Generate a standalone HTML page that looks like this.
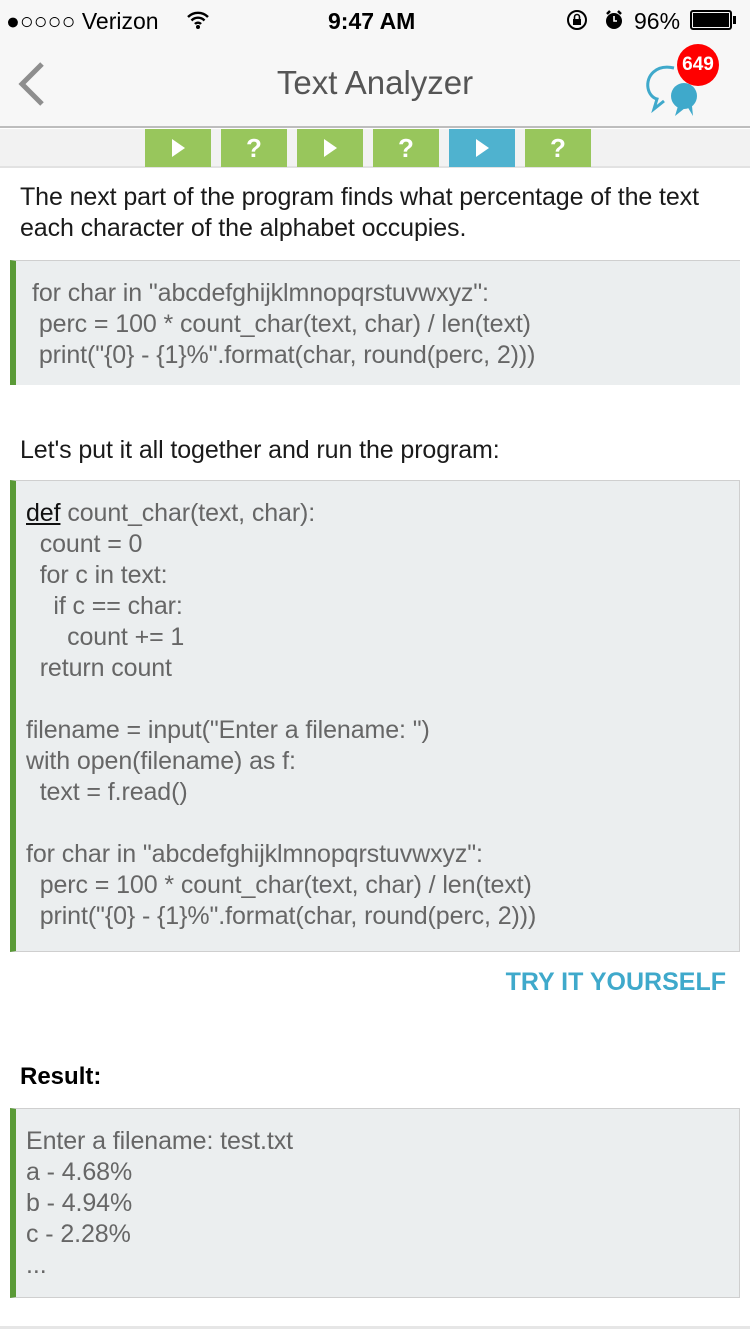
<!DOCTYPE html>
<html><head><meta charset="utf-8"><style>
*{margin:0;padding:0;box-sizing:border-box}
body{width:750px;height:1334px;background:#fff;font-family:"Liberation Sans",sans-serif;position:relative;overflow:hidden}
.abs{position:absolute}
.status{top:0;left:0;width:750px;height:40px;background:#f7f7f7;font-size:23px;color:#000}
.nav{top:40px;left:0;width:750px;height:88px;background:#f7f7f7;border-bottom:2px solid #bdbdbd}
.tabs{top:129px;left:0;width:750px;height:39px;background:#f2f2f2;border-bottom:2px solid #e2e2e2}
.tab{position:absolute;top:0;width:66px;height:38px;background:#98c65c;color:#fff;font-size:26px;font-weight:bold;text-align:center;line-height:38px}
.tri{position:absolute;left:27px;top:10px;width:0;height:0;border-top:9px solid transparent;border-bottom:9px solid transparent;border-left:13px solid #fff}
.p{font-size:25px;color:#1a1a1a;line-height:31px;letter-spacing:-0.1px}
.code{left:10px;width:730px;background:#ebeeef;border-top:1px solid #cfcfcf;border-left:6px solid #5a9a37;font-size:25px;color:#666;line-height:31px;white-space:pre;letter-spacing:-0.1px}
</style></head><body>
<div class="abs status">
 <div class="abs" style="left:6px;top:8px">●○○○○ Verizon</div>
 <svg class="abs" style="left:186px;top:10px" width="24" height="20" viewBox="0 0 24 20"><path d="M2 7a14 14 0 0 1 20 0M5.5 10.5a9 9 0 0 1 13 0M9 14a4 4 0 0 1 6 0" stroke="#000" stroke-width="2.4" fill="none"/><circle cx="12" cy="17" r="2" fill="#000"/></svg>
 <div class="abs" style="left:328px;top:8px;font-weight:bold">9:47 AM</div>
 <svg class="abs" style="left:566px;top:9px" width="22" height="22"><circle cx="11" cy="11" r="9" stroke="#000" stroke-width="2" fill="none"/><rect x="7" y="10" width="8" height="6" fill="#000"/><path d="M8.5 10V8a2.5 2.5 0 0 1 5 0v2" stroke="#000" stroke-width="1.6" fill="none"/></svg>
 <svg class="abs" style="left:603px;top:9px" width="22" height="22"><circle cx="11" cy="12" r="8" fill="#000"/><path d="M4 5l3-3M18 5l-3-3" stroke="#000" stroke-width="2.5"/><path d="M11 7v5h3" stroke="#fff" stroke-width="1.6" fill="none"/></svg>
 <div class="abs" style="left:634px;top:8px">96%</div>
 <div class="abs" style="left:690px;top:10px;width:42px;height:20px;border:2px solid #000;border-radius:3px;padding:1px"><div style="width:36px;height:14px;background:#000"></div></div>
 <div class="abs" style="left:733px;top:16px;width:3px;height:8px;background:#000"></div>
</div>
<div class="abs nav">
 <svg class="abs" style="left:14px;top:20px" width="32" height="48"><path d="M28 4L8 24L28 44" stroke="#8e8e8e" stroke-width="5" fill="none"/></svg>
 <div class="abs" style="left:0;width:750px;top:24px;text-align:center;font-size:33px;color:#555">Text Analyzer</div>
 <svg class="abs" style="left:640px;top:20px" width="70" height="62"><path d="M34 8C16 4 6 16 8 28c1 6 5 10 9 11l-3 10 10-8" stroke="#3fa9cb" stroke-width="3" fill="none"/><circle cx="44" cy="36" r="13" fill="#3fa9cb"/><path d="M38 46l-3 10 10-8z" fill="#3fa9cb"/><path d="M47 46l6 10-1-10z" fill="#3fa9cb"/></svg>
 <div class="abs" style="left:677px;top:4px;width:42px;height:42px;border-radius:50%;background:#f00;color:#fff;font-weight:bold;font-size:19px;text-align:center;line-height:42px">649</div>
</div>
<div class="abs tabs">
 <div class="tab" style="left:145px"><div class="tri"></div></div>
 <div class="tab" style="left:221px">?</div>
 <div class="tab" style="left:297px"><div class="tri"></div></div>
 <div class="tab" style="left:373px">?</div>
 <div class="tab" style="left:449px;background:#4fb2cf"><div class="tri"></div></div>
 <div class="tab" style="left:525px">?</div>
</div>
<div class="abs p" style="left:20px;top:182px">The next part of the program finds what percentage of the text<br>each character of the alphabet occupies.</div>
<div class="abs code" style="top:260px;height:125px;padding:17px 0 0 16px">for char in "abcdefghijklmnopqrstuvwxyz":
 perc = 100 * count_char(text, char) / len(text)
 print("{0} - {1}%".format(char, round(perc, 2)))</div>
<div class="abs p" style="left:20px;top:435px">Let's put it all together and run the program:</div>
<div class="abs code" style="top:480px;height:472px;padding:17px 0 0 10px;border-right:1px solid #cfcfcf;border-bottom:1px solid #cfcfcf;width:730px;color:#666"><span style="color:#111;text-decoration:underline">def</span> count_char(text, char):
  count = 0
  for c in text:
    if c == char:
      count += 1
  return count

filename = input("Enter a filename: ")
with open(filename) as f:
  text = f.read()

for char in "abcdefghijklmnopqrstuvwxyz":
  perc = 100 * count_char(text, char) / len(text)
  print("{0} - {1}%".format(char, round(perc, 2)))</div>
<div class="abs" style="right:24px;top:968px;font-size:25px;font-weight:bold;color:#3fa9cb">TRY IT YOURSELF</div>
<div class="abs" style="left:20px;top:1063px;font-size:24px;font-weight:bold;color:#000">Result:</div>
<div class="abs code" style="top:1108px;height:190px;padding:17px 0 0 10px;border-right:1px solid #cfcfcf;border-bottom:1px solid #cfcfcf">Enter a filename: test.txt
a - 4.68%
b - 4.94%
c - 2.28%
...</div>
<div class="abs" style="left:0;top:1326px;width:750px;height:3px;background:#e6e6e6"></div>
</body></html>
